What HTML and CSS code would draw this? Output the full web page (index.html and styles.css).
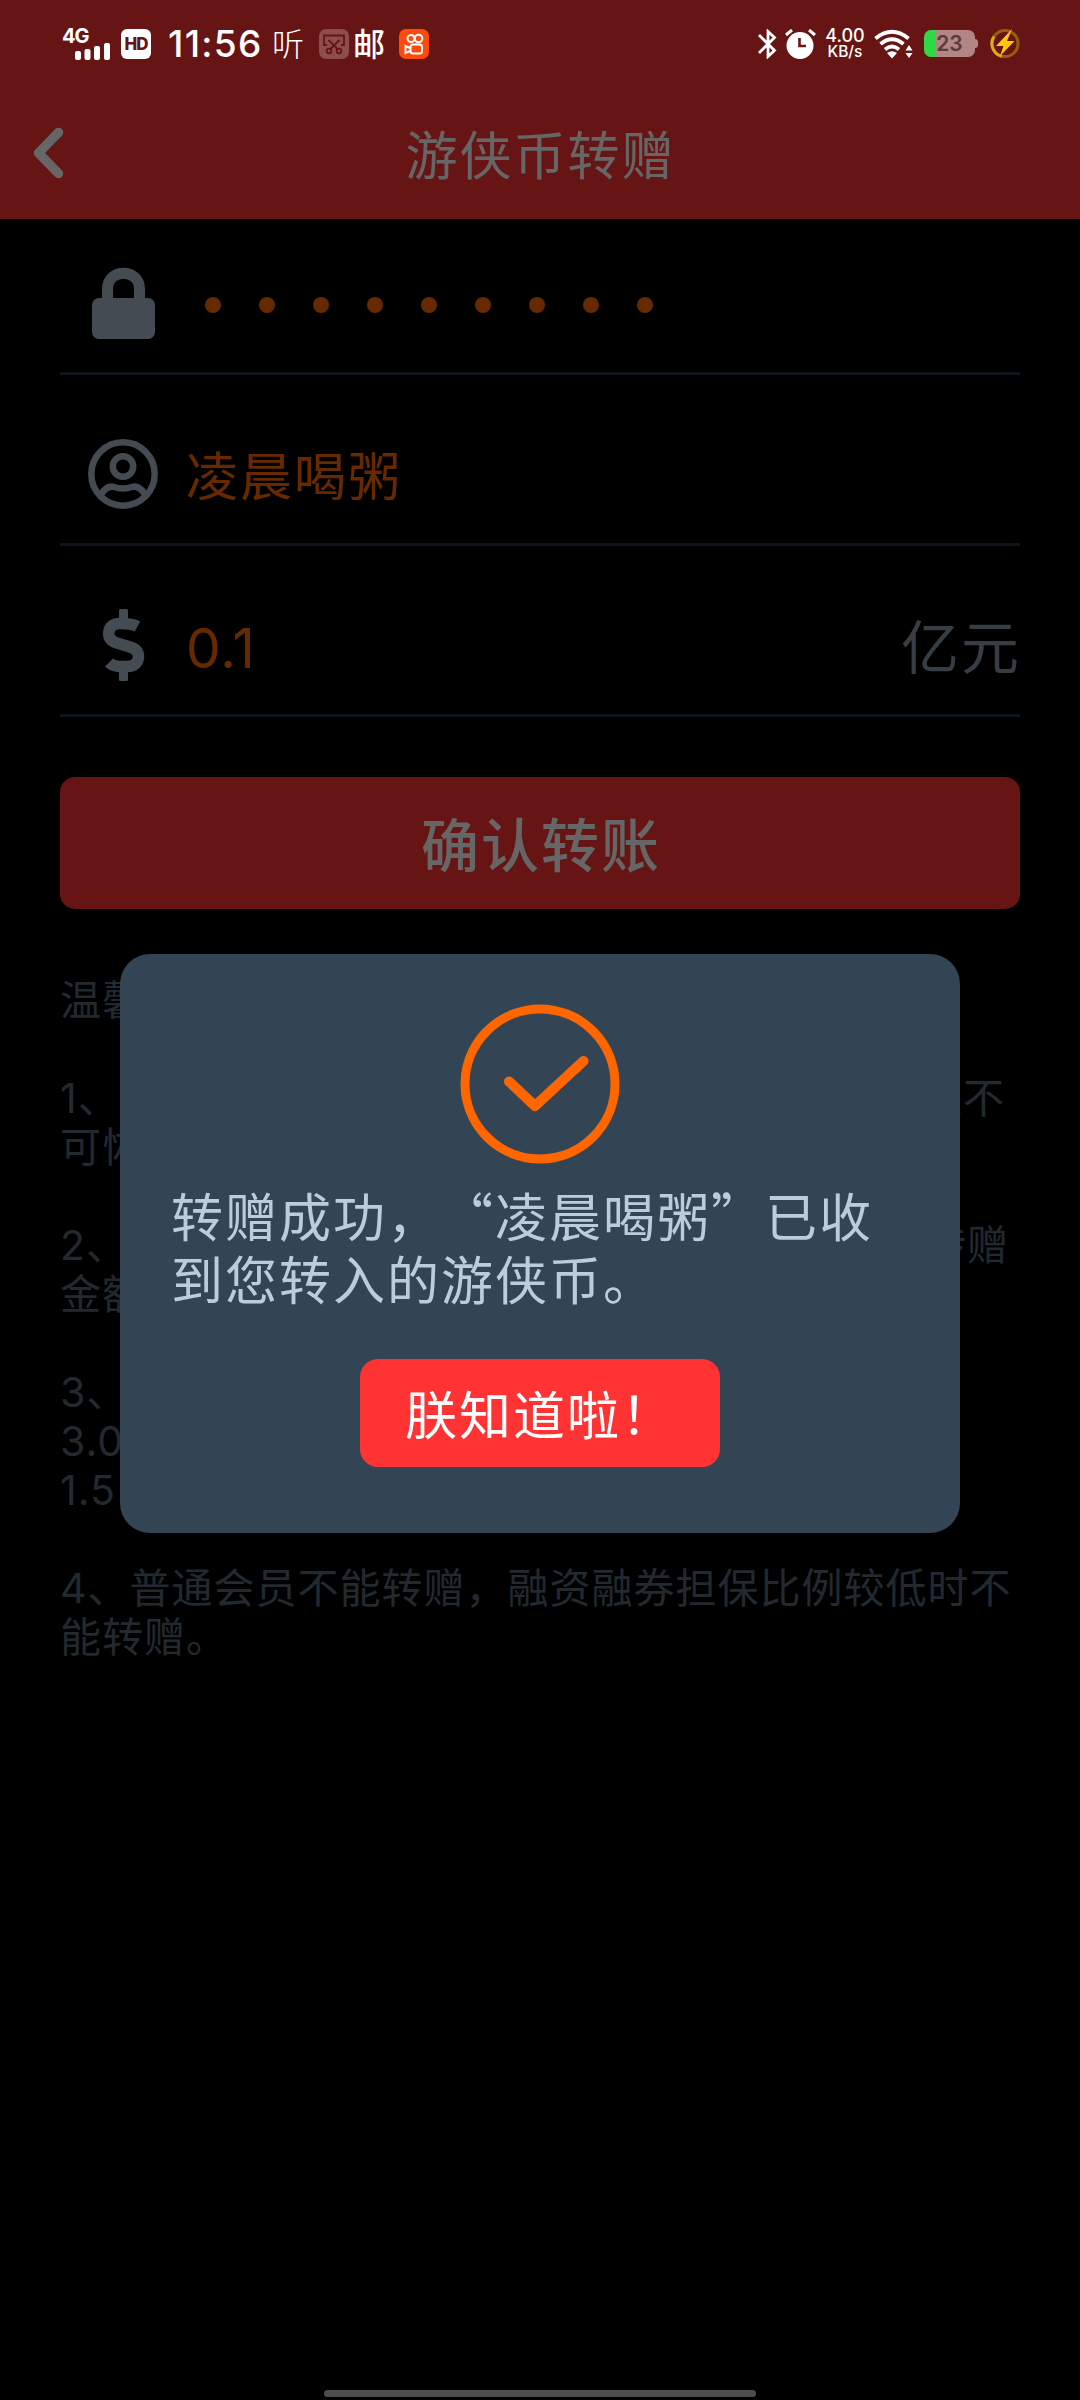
FILE: index.html
```html
<!DOCTYPE html>
<html lang="zh-CN">
<head>
<meta charset="utf-8">
<title>游侠币转赠</title>
<link rel="stylesheet" href="styles.css">
</head>
<body>
<div class="screen">
  <div class="status">
    <div class="network">
      <span class="network-type">4G</span>
      <svg class="bars" width="36" height="17" viewBox="0 0 36 17" fill="#fff"><rect x="0" y="8" width="6" height="9" rx="2"/><rect x="9.5" y="6" width="6" height="11" rx="2"/><rect x="19" y="3" width="6" height="14" rx="2"/><rect x="29" y="0" width="6" height="17" rx="2"/></svg>
    </div>
    <span class="hd">HD</span>
    <span class="clock">11:56</span>
    <span class="app-glyph listen">听</span>
    <svg class="snip" width="30" height="30" viewBox="0 0 30 30"><rect width="30" height="30" rx="7" fill="#8c4d4d"/><g fill="none" stroke="#661414" stroke-width="1.8"><path d="M8 16H5V6.500H25V16H22M9.500 11L19 20.500M20.500 11L11 20.500"/><circle cx="10" cy="22" r="2.300"/><circle cx="20" cy="22" r="2.300"/></g></svg>
    <span class="app-glyph mail">邮</span>
    <svg class="video" width="30" height="30" viewBox="0 0 30 30"><rect width="30" height="30" rx="7" fill="#ff4a0c"/><g fill="none" stroke="#fff" stroke-width="2"><circle cx="12" cy="9.500" r="3.500"/><circle cx="19.500" cy="9.500" r="3.800"/><rect x="11.500" y="15.500" width="11.500" height="9" rx="2.500"/><path d="M11 19L6.500 17V24L11 22"/></g></svg>
    <svg class="bluetooth" width="19" height="30" viewBox="0 0 19 30" fill="none" stroke="#fff" stroke-width="2.800"><path d="M1 6L16.500 21.500L10 27.500V2.500L16.500 8.500L1 24"/></svg>
    <svg class="alarm" width="31" height="30" viewBox="0 0 31 30"><circle cx="15" cy="16.500" r="13.500" fill="#fff"/><path d="M1 6L7 1M24 1L30 6" stroke="#fff" stroke-width="3"/><path d="M14.500 9V17H21" fill="none" stroke="#661414" stroke-width="2.600"/></svg>
    <span class="speed"><span>4.00</span><span class="speed-unit">KB/s</span></span>
    <svg class="wifi" width="40" height="30" viewBox="0 0 40 30"><g fill="none" stroke="#fff" stroke-width="3.800"><path d="M1.500 9.500Q18 -4 34.500 9.500"/><path d="M6.500 15Q18 5.500 29.500 15"/><path d="M11 20.500Q18 14.500 25 20.500"/></g><path d="M13 24Q18 20.500 23 24L18 29.500Z" fill="#fff"/><path d="M35 16L38.500 21.500H31.500ZM35 29L31.500 24H38.500Z" fill="#fff"/></svg>
    <div class="battery"><span>23</span></div>
    <svg class="bolt" width="30" height="31" viewBox="0 0 30 31"><circle cx="15" cy="15.500" r="13" fill="none" stroke="#97600f" stroke-width="3"/><path d="M12 28.300A13 13 0 0 1 4 8.500" fill="none" stroke="#e3a812" stroke-width="3"/><path d="M22 1L6 18H13.500L10 28L24.500 13H17Z" fill="#ffc80a"/></svg>
  </div>

  <header class="titlebar">
    <svg class="back" width="32" height="52" viewBox="0 0 32 52" fill="none" stroke="#fff" stroke-width="9.500" stroke-linecap="round" stroke-linejoin="round"><path d="M26.500 5.500L6.500 26L26.500 46.500"/></svg>
    <h1>游侠币转赠</h1>
  </header>

  <main class="page">
    <div class="field first">
      <svg class="field-icon" width="70" height="72" viewBox="0 0 70 72"><rect x="4" y="31" width="63" height="41" rx="7" fill="#abc"/><path d="M19.500 34V22C19.500 1 51.500 1 51.500 22V34" fill="none" stroke="#abc" stroke-width="11"/></svg>
      <div class="password"><i></i><i></i><i></i><i></i><i></i><i></i><i></i><i></i><i></i></div>
    </div>
    <div class="field">
      <svg class="field-icon" width="70" height="70" viewBox="0 0 70 70" fill="none" stroke="#abc" stroke-width="6.500"><circle cx="35" cy="35" r="31.700"/><circle cx="35" cy="27.500" r="10.200"/><path d="M12.500 56C17 49 21 46.500 26 48Q35 51 44 48C49 46.500 53 49 57.500 56"/></svg>
      <span class="value">凌晨喝粥</span>
    </div>
    <div class="field">
      <svg class="field-icon" width="70" height="72" viewBox="-15 0 70 72"><path d="M34.500 17.500C30 15 26 14.500 17 14.500C9 14.500 5.700 19 5.700 24.500C5.700 30 9 32.500 14 34L27 38C32 39.500 35.500 42.500 35.500 47.500C35.500 53 32 57.500 24 57.500H17C12 57.500 9 56.500 6 53.500" fill="none" stroke="#abc" stroke-width="11.500" stroke-linejoin="round"/><rect x="16" y="0" width="9" height="12" rx="1.500" fill="#abc"/><rect x="16" y="60" width="9" height="12" rx="1.500" fill="#abc"/></svg>
      <span class="value amount">0.1</span>
      <span class="unit">亿元</span>
    </div>
    <div class="submit">确认转账</div>
    <div class="tips">
      <p>温馨提示：</p>
      <p class="split"><span>1、</span><span>转入不</span></p>
      <p class="tail">可恢复。</p>
      <p class="split wide"><span>2、</span><span>转赠</span></p>
      <p class="tail">金额。</p>
      <p>3、</p>
      <p class="tail">3.0%</p>
      <p class="tail">1.5%</p>
      <p>4、普通会员不能转赠，融资融券担保比例较低时不</p>
      <p class="tail">能转赠。</p>
    </div>
  </main>

  <div class="overlay">
    <div class="dialog">
      <svg class="success" width="160" height="160" viewBox="0 0 160 160" fill="none" stroke="#f60" stroke-linecap="round" stroke-linejoin="round"><circle cx="80" cy="80" r="75" stroke-width="9"/><path d="M49 77.500L75 102L123.500 57" stroke-width="10"/></svg>
      <p class="message">转赠成功，“凌晨喝粥”已收到您转入的游侠币。</p>
      <div class="confirm">朕知道啦！</div>
    </div>
  </div>
  <div class="home-bar"></div>
</div>
</body>
</html>
```
FILE: styles.css
```css
* { box-sizing: border-box; margin: 0; padding: 0; }
body { background: #000; font-family: "Noto Sans CJK SC", sans-serif; text-spacing-trim: space-all; }
svg { display: block; flex: none; }
.screen { position: relative; width: 1080px; height: 2400px; overflow: hidden; background: #000; }

.status { position: relative; z-index: 2; display: flex; height: 87px; padding: 0 60px 0 62px; align-items: center; background: #661414; color: #fff; font-family: Inter, "Noto Sans CJK SC", sans-serif; }
.network { width: 49px; height: 32px; }
.network-type { display: block; height: 15px; font-size: 20px; line-height: 16px; font-weight: 700; letter-spacing: -1px; }
.bars { margin-left: 13px; }
.hd { width: 30px; height: 30px; margin-left: 10px; border-radius: 6px; background: #fff; color: #661414; font-size: 17px; line-height: 30px; font-weight: 800; letter-spacing: -1px; text-align: center; }
.clock { width: 94px; margin-left: 17px; font-size: 37px; line-height: 40px; letter-spacing: 1.3px; font-weight: 500; white-space: nowrap; }
.app-glyph { width: 33px; height: 34px; font-family: "Noto Sans CJK SC", sans-serif; font-size: 32px; line-height: 30px; }
.listen { margin-left: 10px; font-weight: 300; }
.snip { margin-left: 14px; }
.mail { margin-left: 4px; font-weight: 500; }
.video { margin-left: 13px; }
.bluetooth { margin-left: auto; }
.alarm { margin-left: 8px; }
.speed { display: flex; flex-direction: column; width: 42px; margin-left: 8px; align-items: center; font-size: 18px; line-height: 17px; font-weight: 500; }
.speed-unit { font-size: 15.500px; line-height: 16px; }
.wifi { margin-left: 8px; }
.battery { position: relative; width: 51px; height: 27px; margin: 0 15px 0 10px; border-radius: 7px; background: linear-gradient(90deg, #2fd845 12px, #b38585 12px); color: #573c3c; font-size: 21px; line-height: 28px; font-weight: 600; text-align: center; }
.battery::after { content: ""; position: absolute; right: -3px; top: 9px; width: 3px; height: 9px; border-radius: 0 3px 3px 0; background: #b38585; }

.titlebar { display: grid; grid-template-columns: 64px 1fr 64px; height: 132px; align-items: center; background: #f33; color: #fff; }
.back { justify-self: end; }
.titlebar h1 { padding-left: 1px; font-size: 52px; line-height: 60px; letter-spacing: 2px; font-weight: 400; text-align: center; }

.page { padding: 0 60px; }
.field { display: flex; height: 171px; padding: 30px 0 0 28px; align-items: center; border-bottom: 3px solid #234; }
.field.first { height: 156px; padding-top: 15px; }
.password { display: flex; gap: 38px; padding: 4px 0 0 47px; }
.password i { width: 16px; height: 16px; border-radius: 50%; background: #f60; }
.value { margin-left: 28px; padding-bottom: 1px; color: #f60; font-size: 52px; line-height: 70px; letter-spacing: 2px; }
.amount { padding: 5px 0 0; font-family: Inter, sans-serif; font-size: 55px; letter-spacing: 1px; }
.unit { margin-left: auto; color: #89a; font-size: 58px; line-height: 70px; letter-spacing: 2px; transform: translate(1px, -1px); }
.submit { height: 132px; margin-top: 60px; border-radius: 15px; background: #f33; color: #fff; font-size: 58px; line-height: 131px; letter-spacing: 2px; padding-left: 2px; font-weight: 500; text-align: center; }
.tips { padding-top: 18px; color: #567; font-family: Inter, "Noto Sans CJK SC", sans-serif; font-size: 41px; line-height: 49px; letter-spacing: 1px; white-space: nowrap; }
.tips p { margin-top: 49px; }
.tips .tail { margin-top: 0; }
.split { display: flex; justify-content: space-between; padding-right: 15px; }
.split.wide { padding-right: 11px; }

.overlay { position: absolute; inset: 87px 0 0; z-index: 1; display: flex; padding: 867px 120px 0; align-items: flex-start; background: rgba(0, 0, 0, .6); }
.dialog { width: 840px; height: 579px; padding: 50px 50px 0 51px; border-radius: 30px; background: #345; }
.success { margin: 0 auto; transform: translateX(-1px); }
.message { margin-top: 19px; color: #bcd; font-size: 52px; line-height: 63px; letter-spacing: 2px; }
.confirm { width: 360px; height: 108px; margin: 50px auto 0 189px; border-radius: 18px; background: #f33; color: #fff; font-size: 52px; line-height: 108px; letter-spacing: 2px; text-align: center; }
.home-bar { position: absolute; z-index: 3; left: 324px; bottom: 3px; width: 432px; height: 7px; border-radius: 4px; background: #4d4d4d; }
```
